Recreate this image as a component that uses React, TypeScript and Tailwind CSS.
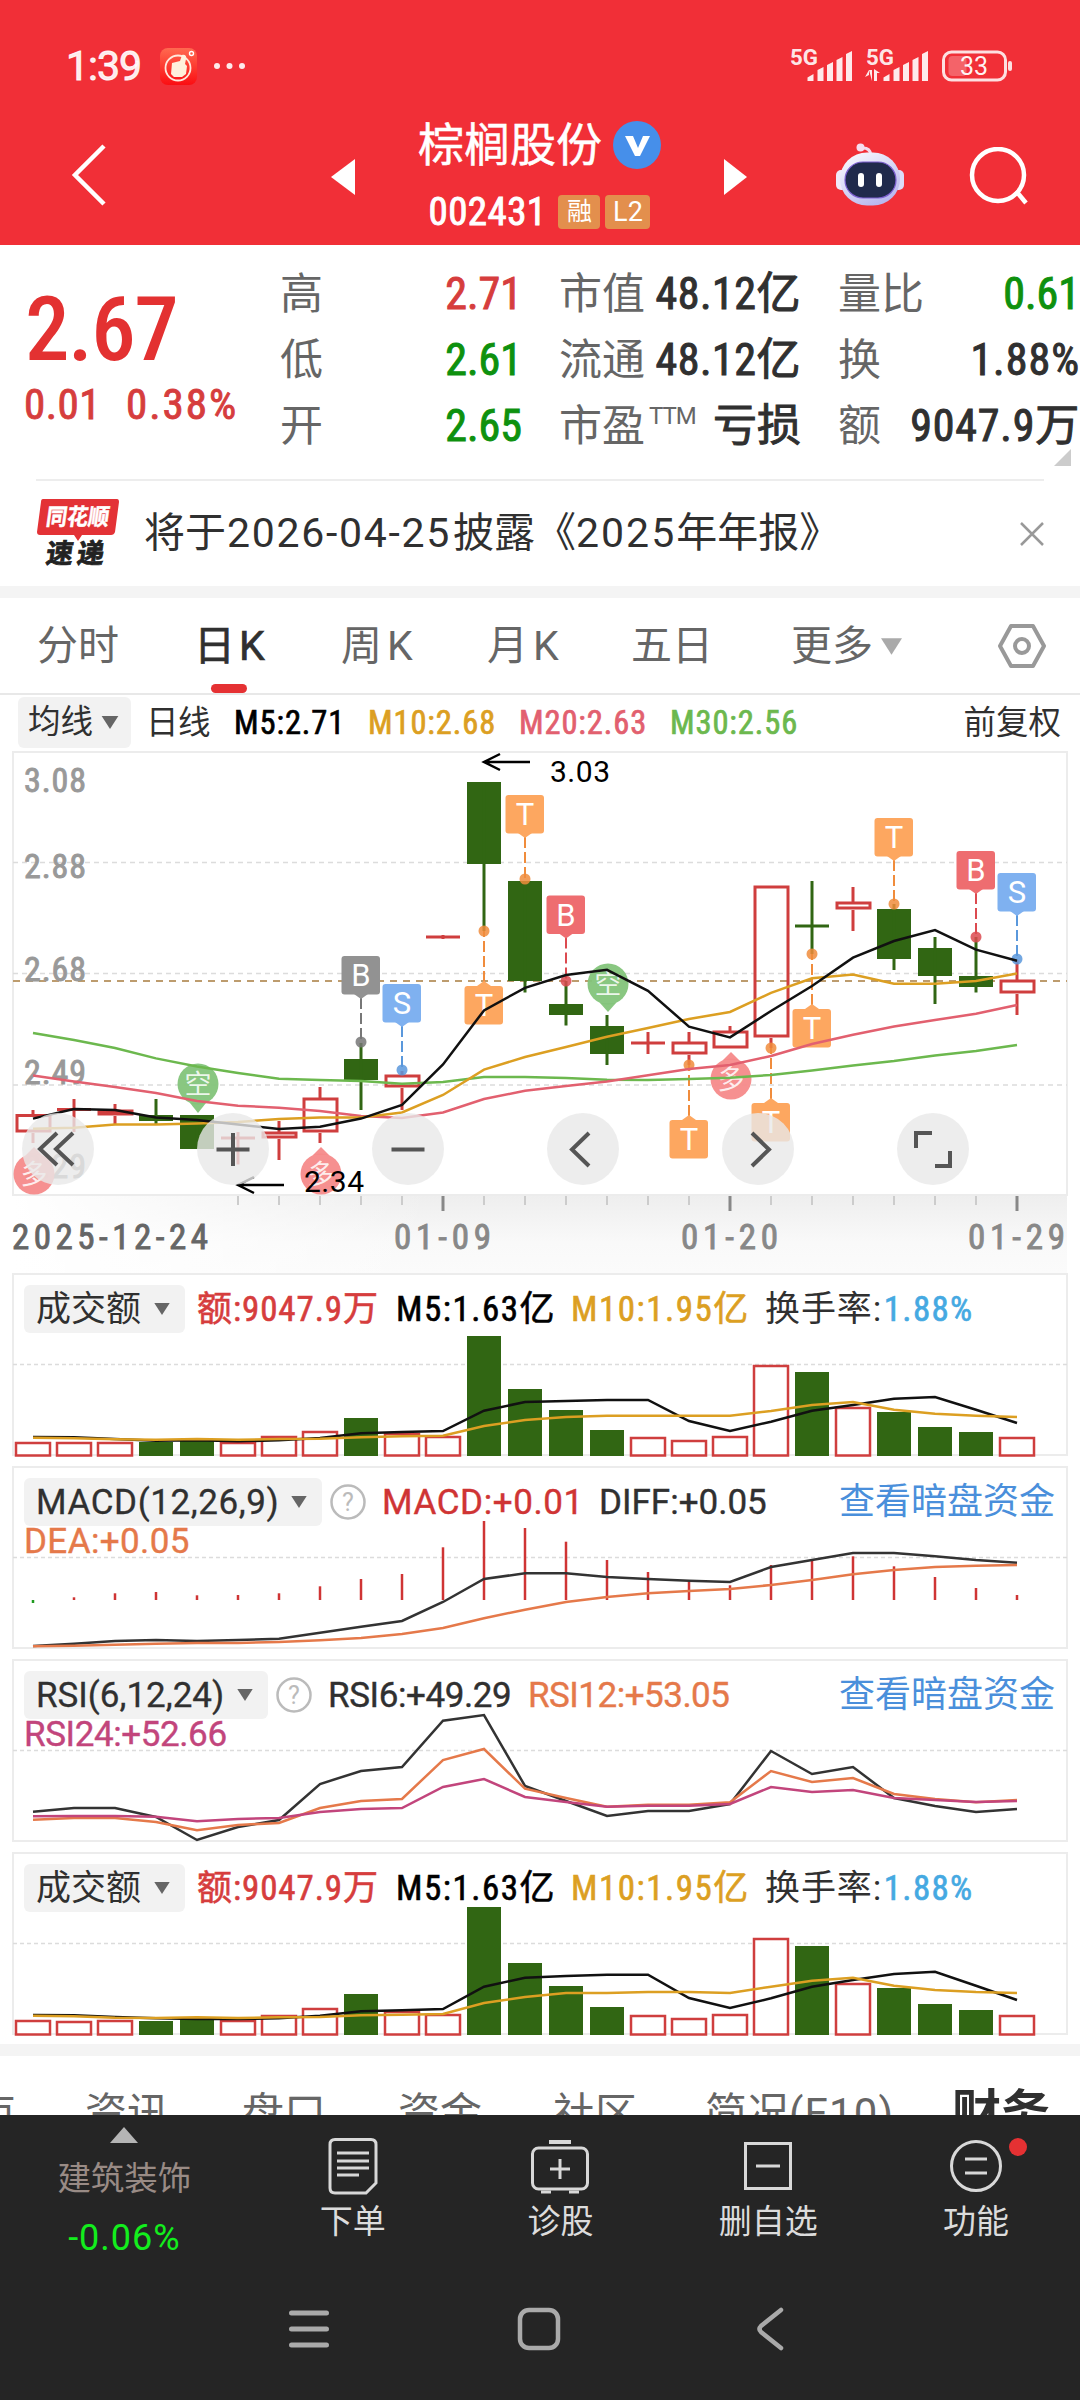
import type { ReactNode } from "react";

const GREEN = "#316613";
const RED = "#cf3e3e";

const colX = (i: number) => 33 + i * 41;

const toPoints = (ys: number[]) =>
  ys.map((y, i) => `${colX(i)},${y}`).join(" ");

type Candle = {
  top: number;
  bottom: number;
  high: number;
  low: number;
  up?: boolean;
};

const candles: Candle[] = [
  { top: 364.5, bottom: 383, high: 360, low: 393, up: true },
  { top: 359.5, bottom: 360.5, high: 349, low: 382, up: true },
  { top: 360, bottom: 366, high: 354, low: 375, up: true },
  { top: 365, bottom: 371, high: 349, low: 374 },
  { top: 365, bottom: 399, high: 365, low: 399 },
  { top: 388, bottom: 388, high: 382, low: 414.5, up: true },
  { top: 382, bottom: 389, high: 371, low: 410, up: true },
  { top: 348, bottom: 383, high: 337, low: 393, up: true },
  { top: 309, bottom: 330, high: 293, low: 360 },
  { top: 325, bottom: 338, high: 321, low: 360, up: true },
  { top: 187, bottom: 187, high: 185, low: 189, up: true },
  { top: 32, bottom: 114, high: 32, low: 181 },
  { top: 131, bottom: 231, high: 131, low: 242.5 },
  { top: 254, bottom: 265, high: 231, low: 275.5 },
  { top: 276, bottom: 304, high: 265, low: 315 },
  { top: 293, bottom: 293, high: 282, low: 304, up: true },
  { top: 292, bottom: 305, high: 282, low: 315, up: true },
  { top: 281, bottom: 299, high: 276, low: 298, up: true },
  { top: 136, bottom: 288, high: 136, low: 298, up: true },
  { top: 176, bottom: 176, high: 131, low: 204 },
  { top: 152, bottom: 160, high: 137, low: 181, up: true },
  { top: 159, bottom: 209, high: 154, low: 220 },
  { top: 198, bottom: 226, high: 187, low: 254 },
  { top: 226, bottom: 237, high: 187, low: 242.5 },
  { top: 230, bottom: 244, high: 210, low: 265, up: true },
];

const averages = [
  {
    color: "#6cb84e",
    ys: [283, 290, 298, 308.4, 316.5, 323, 328.7, 330, 331, 333.7, 332, 327, 327, 328, 329.7, 330, 329, 327.7, 325, 320.6, 315.5, 311, 305.4, 301, 295],
  },
  {
    color: "#e2606f",
    ys: [325.6, 331.4, 337, 343, 351, 355.7, 357.7, 361, 365.9, 368, 362.5, 349, 340.8, 336, 331.4, 325.3, 319, 315, 306, 294, 284.7, 276.6, 270, 263.8, 255],
  },
  {
    color: "#dc9f22",
    ys: [378.7, 377.7, 374.6, 374.6, 373.6, 372, 369, 367.6, 367.6, 362.5, 345, 319.6, 307, 297, 286.8, 278, 269, 262, 242.8, 228.3, 224.6, 233.7, 233.7, 231, 223.6],
  },
  {
    color: "#111111",
    ys: [368.6, 359, 360, 367.6, 370, 374.6, 379, 376.7, 368.6, 355, 314.5, 260.4, 237.8, 225, 219.8, 240.8, 276.6, 287.4, 261, 236, 207.7, 191, 180, 199.6, 210.7],
  },
];

const markers = [
  { i: 8, box: 206, dot: 292, label: "B", fill: "#929292", line: "#777777" },
  { i: 9, box: 234, dot: 320, label: "S", fill: "#7fb1f0", line: "#5a98dc" },
  { i: 11, box: 236, dot: 181, label: "T", fill: "#fda760", line: "#f08c3c" },
  { i: 12, box: 45, dot: 129, label: "T", fill: "#fda760", line: "#f08c3c" },
  { i: 13, box: 145.5, dot: 231, label: "B", fill: "#ee6d70", line: "#dc4a50" },
  { i: 16, box: 370, dot: 315, label: "T", fill: "#fda760", line: "#f08c3c" },
  { i: 18, box: 353, dot: 298, label: "T", fill: "#fda760", line: "#f08c3c" },
  { i: 19, box: 259, dot: 204, label: "T", fill: "#fda760", line: "#f08c3c" },
  { i: 21, box: 68, dot: 154, label: "T", fill: "#fda760", line: "#f08c3c" },
  { i: 23, box: 101, dot: 187, label: "B", fill: "#ee6d70", line: "#dc4a50" },
  { i: 24, box: 123, dot: 209, label: "S", fill: "#7fb1f0", line: "#5a98dc" },
];

const pins = [
  { i: 0, cy: 424, tip: 397, label: "多" },
  { i: 4, cy: 334, tip: 363, label: "空" },
  { i: 7, cy: 424, tip: 397, label: "多" },
  { i: 14, cy: 234, tip: 262, label: "空" },
  { i: 17, cy: 329, tip: 302, label: "多" },
];

const upBars = [0, 1, 2, 5, 6, 7, 9, 10, 15, 16, 17, 18, 20, 24];

const volumeA = {
  bars: [170, 170, 170, 169, 168, 170, 164, 159, 145, 161, 164, 63, 116, 137, 157, 165, 168, 164, 93, 99, 135, 139, 154, 159, 165],
  m5: [164, 164.3, 166, 167.7, 167.3, 168.3, 167.3, 165, 160.3, 159, 158, 137.7, 129, 128, 127, 127, 148, 158, 148.7, 137.7, 132, 125.7, 124, 136.7, 150],
  m10: [164.7, 165.3, 166.3, 166.7, 166, 166.7, 166, 165.7, 164.3, 163.3, 162.7, 153, 147, 144, 142.7, 142.7, 142.7, 142.7, 138, 132, 129, 136.7, 140.7, 142.7, 144],
};

const volumeB = {
  bars: [169, 170, 169, 169, 167, 169, 164, 157, 142, 160, 163, 55, 111, 134, 155, 164, 167, 163, 87, 94, 132, 136, 152, 158, 164],
  m5: [163, 163.3, 165, 166.3, 167, 167, 166.3, 163.7, 159.3, 158.3, 157, 134.7, 125.7, 124, 122.7, 122.7, 146, 156, 146.3, 134.7, 128, 122, 119.7, 133.7, 148],
  m10: [163.7, 164.3, 165.7, 166, 165.3, 166, 165.3, 165, 163.3, 162.7, 162, 151, 145, 141, 141, 140, 140, 141, 134.7, 128.7, 125.7, 133.7, 138, 140, 141],
};

const macd = {
  bars: [137, 131.3, 127.3, 126, 129.3, 129, 127.3, 120.3, 113, 108, 81.3, 55, 62, 75.7, 94, 106, 116, 119.3, 99, 95, 90.3, 100.3, 111, 122, 129],
  diff: [180, 177.7, 175, 174, 175, 174, 172.7, 166.7, 160.7, 155, 136, 113, 107.3, 107.3, 111, 113, 114.7, 116, 101, 94, 87, 87, 90.3, 94, 96.7],
  dea: [180.3, 179.7, 178.7, 177.7, 177, 177, 176, 174.3, 172, 168, 162, 152.3, 143.7, 136, 131, 127.3, 125, 123, 119, 114, 108.3, 104, 101, 99.7, 99],
};

const rsi = [
  {
    color: "#333333",
    ys: [152.7, 149, 149, 158, 181, 168, 161, 125, 112, 108, 61.7, 56, 127, 142, 157, 152, 152, 145, 92, 115, 108, 139, 147, 153, 150],
  },
  {
    color: "#e5794a",
    ys: [160.7, 159, 159, 163, 171.3, 166, 164, 149, 142, 140, 101, 90, 129.7, 139, 147.7, 145.7, 145.7, 143.3, 112, 123, 119, 135, 140, 143.3, 141],
  },
  {
    color: "#c2457c",
    ys: [157.3, 157, 157, 157.7, 162.3, 160, 159, 153, 150, 149, 128, 120, 138, 143, 147.7, 146.7, 146.7, 145, 128, 133, 131, 139, 141, 143, 142],
  },
];

function Caret({ className }: { className: string }) {
  return (
    <svg viewBox="0 0 18 14" className={className}>
      <path d="M0 0h18L9 14z" fill="currentColor" />
    </svg>
  );
}

function Signal({ data }: { data?: boolean }) {
  return (
    <svg width="66" height="40" viewBox="0 0 66 40" fill="#fff" fillOpacity="0.9" className="overflow-visible">
      <text x="0" y="19" fontSize="22" fontWeight="700" textLength="28" lengthAdjust="spacingAndGlyphs">
        5G
      </text>
      <path d="M17.500 35v-3.500l6-3.500v7z" />
      <path d="M27.500 35V24l6-3v14zM37 35V19l6-3v19zM46.500 35V14l6-3v24zM56 35V8l6-3v30z" />
      {data && <path d="M3 24h3v11zL-1 31l4-2zM8 35h3V27h3l-6-4z" />}
    </svg>
  );
}

function StatusBar() {
  return (
    <div className="flex h-[90px] items-center pt-[42px] pl-[66px]">
      <span className="w-[94px] text-[41px] leading-none tracking-[-1px] text-white/90 [-webkit-text-stroke:0.900px]">1:39</span>
      <svg width="37" height="37" viewBox="0 0 37 37">
        <defs>
          <linearGradient id="app" x1="0" y1="0" x2="0" y2="1">
            <stop offset="0" stopColor="#ff6a50" />
            <stop offset="1" stopColor="#fb0d12" />
          </linearGradient>
        </defs>
        <rect width="37" height="37" rx="8" fill="url(#app)" />
        <circle cx="18" cy="20" r="12.500" fill="none" stroke="#ffe9dc" strokeWidth="1.800" />
        <path d="M12 15l8-2 2-6c3-1 5 1 4 4l-1 5 2 2-1 8-4 3h-8l-3-3z" fill="#fff1dc" />
        <circle cx="31.500" cy="5.500" r="2" fill="none" stroke="#fff" strokeWidth="1.400" />
      </svg>
      <svg width="34" height="8" viewBox="0 0 34 8" className="ml-[16px]" fill="#fff" fillOpacity="0.9">
        <circle cx="4" cy="4" r="3" />
        <circle cx="16.500" cy="4" r="3" />
        <circle cx="29" cy="4" r="3" />
      </svg>
      <div className="ml-[543px] flex items-center gap-[10px]">
        <Signal />
        <Signal data />
        <svg width="72" height="34" viewBox="0 0 72 34">
          <rect x="1.500" y="3" width="62" height="28" rx="8" fill="none" stroke="#fff" strokeOpacity="0.85" strokeWidth="3" />
          <rect x="6.500" y="7" width="18" height="20" rx="4" fill="#fff" fillOpacity="0.25" />
          <rect x="66" y="12" width="4" height="10" rx="2" fill="#fff" fillOpacity="0.85" />
          <text x="18" y="26" fontSize="25" fill="#fff" fillOpacity="0.95" textLength="28">
            33
          </text>
        </svg>
      </div>
    </div>
  );
}

function Header() {
  return (
    <header className="h-[245px] bg-[#f12f37] text-white">
      <StatusBar />
      <div className="flex h-[155px] items-center pt-[19px]">
        <svg width="36" height="64" viewBox="0 0 36 64" className="-mt-[4px] ml-[71px]">
          <path d="M33 3L4 32l29 29" fill="none" stroke="#fff" strokeWidth="4.500" />
        </svg>
        <svg width="24" height="36" viewBox="0 0 24 36" className="ml-[224px]">
          <path d="M24 0v36L0 18z" fill="#fff" />
        </svg>
        <div className="-mt-[7px] flex w-[369px] flex-col items-center">
          <div className="flex h-[60px] items-center gap-[11px]">
            <h1 className="text-[46px] leading-none [-webkit-text-stroke:0.500px]">棕榈股份</h1>
            <svg width="48" height="48" viewBox="0 0 48 48">
              <circle cx="24" cy="24" r="24" fill="#468fea" />
              <path d="M12 15h8l5 12 5-12h7L27 35h-5z" fill="#fff" />
            </svg>
          </div>
          <div className="mt-[17px] flex h-[40px] items-center">
            <span className="mr-[12px] font-stretch-condensed text-[39px] leading-none tracking-[0.400px] [-webkit-text-stroke:0.900px]">
              002431
            </span>
            <span className="mr-[5px] flex h-[34px] w-[42px] items-center justify-center rounded-[4px] bg-[#e38f4d] text-[25px]">
              融
            </span>
            <span className="flex h-[34px] w-[45px] items-center justify-center rounded-[4px] bg-[#e38f4d] text-[27px]">
              L2
            </span>
          </div>
        </div>
        <svg width="23" height="36" viewBox="0 0 23 36">
          <path d="M0 0v36l23-18z" fill="#fff" />
        </svg>
        <svg width="68" height="64" viewBox="0 0 68 64" className="-mt-[4px] ml-[89px]">
          <defs>
            <linearGradient id="head" x1="0" y1="0" x2="0.600" y2="1">
              <stop offset="0" stopColor="#ffffff" />
              <stop offset="1" stopColor="#b9b8ee" />
            </linearGradient>
          </defs>
          <rect x="0" y="27" width="12" height="20" rx="5" fill="#f0e9f9" />
          <rect x="56" y="27" width="12" height="20" rx="5" fill="#dcdcf8" />
          <path d="M25 5q9-1 10 7" fill="none" stroke="#f3dbee" strokeWidth="3" />
          <circle cx="24.500" cy="4.500" r="4" fill="#f6def0" />
          <rect x="4" y="9.500" width="60" height="53" rx="27" fill="url(#head)" />
          <rect x="9" y="19" width="51" height="36" rx="18" fill="#202a4c" stroke="#7c5fd0" strokeWidth="1.200" />
          <rect x="22" y="30" width="6" height="14" rx="3" fill="#fff" />
          <rect x="40" y="30" width="6" height="14" rx="3" fill="#fff" />
        </svg>
        <svg width="60" height="60" viewBox="0 0 60 60" className="ml-[65px]" fill="none" stroke="#fff" strokeWidth="4.500">
          <circle cx="29" cy="28" r="26" />
          <path d="M47 44l10 12" />
        </svg>
      </div>
    </header>
  );
}

function Stat({ label, children, className }: { label: ReactNode; children: ReactNode; className: string }) {
  return (
    <div className="flex items-center justify-between whitespace-nowrap">
      <span className="text-[43px] text-[#666]">{label}</span>
      <span className={`font-stretch-condensed text-[44px] [-webkit-text-stroke:1px] ${className}`}>{children}</span>
    </div>
  );
}

function Quote() {
  return (
    <section className="relative flex h-[234px] leading-none">
      <div className="w-[280px] pt-[40px] font-stretch-condensed text-[#e33131]">
        <p className="pl-[25px] text-[89px] leading-[90px] font-medium tracking-[-1.500px]">2.67</p>
        <p className="mt-[4px] flex gap-[25px] pl-[24px] text-[43px] leading-[50px] text-[#d63d3d] [-webkit-text-stroke:0.900px]">
          <span className="tracking-[0.500px]">0.01</span>
          <span className="tracking-[2px]">0.38%</span>
        </p>
      </div>
      <div className="grid h-[216px] grid-cols-[242px_242px_242px] grid-rows-[66px_66px_66px] gap-x-[37px] pt-[16px] text-[#303030]">
        <Stat label="高" className="text-[#d63d3d]">2.71</Stat>
        <Stat label="市值" className="tracking-[0.5px]">48.12亿</Stat>
        <Stat label="量比" className="text-[#0e910e]">0.61</Stat>
        <Stat label="低" className="text-[#0e910e]">2.61</Stat>
        <Stat label="流通" className="tracking-[0.5px]">48.12亿</Stat>
        <Stat label="换" className="tracking-[1px]">1.88%</Stat>
        <Stat label="开" className="text-[#0e910e]">2.65</Stat>
        <Stat
          label={
            <span className="flex">
              市盈<span className="mt-[-1px] ml-[4px] text-[24px] tracking-[-1px]">TTM</span>
            </span>
          }
          className=""
        >
          亏损
        </Stat>
        <Stat label="额" className="tracking-[0.800px]">9047.9万</Stat>
      </div>
      <svg width="17" height="17" viewBox="0 0 17 17" className="absolute right-[9px] bottom-[13px]">
        <path d="M17 0v17H0z" fill="#ccc" />
      </svg>
    </section>
  );
}

function Notice() {
  return (
    <div className="px-[36px]">
      <div className="flex h-[107px] items-center border-t-2 border-[#ededed]">
        <svg width="86" height="70" viewBox="0 0 86 70" fontWeight="700" className="overflow-visible">
          <path d="M7 0h74q2 0 2 3l-4 30q-1 3-4 3H46l-4 6-4-6H4q-3 0-3-3L5 3q0-3 2-3z" fill="#e33236" />
          <g transform="skewX(-8)" stroke="#fff" strokeWidth="0.500">
            <text x="13" y="26" fontSize="23" fill="#fff" textLength="63" lengthAdjust="spacingAndGlyphs">
              同花顺
            </text>
          </g>
          <g transform="skewX(-8)" stroke="#222" strokeWidth="0.800">
            <text x="18" y="64" fontSize="27" fill="#222" textLength="58">
              速递
            </text>
          </g>
        </svg>
        <p className="ml-[22px] text-[41px] leading-none whitespace-nowrap text-[#303030]">
          将于<span className="mr-[2px] ml-[1px] tracking-[1.700px]">2026-04-25</span>披露《
          <span className="tracking-[2px]">2025</span>年年报》
        </p>
        <svg width="24" height="24" viewBox="0 0 24 24" className="ml-auto" stroke="#999" strokeWidth="2.500">
          <path d="M1 1l22 22M23 1L1 23" />
        </svg>
      </div>
    </div>
  );
}

function PeriodTabs() {
  return (
    <nav className="flex h-[97px] items-center border-b-2 border-[#e8e8e8] pt-px pl-[37px] text-[41px] leading-none whitespace-nowrap text-[#666]">
      <span className="w-[157px]">分时</span>
      <span className="relative flex h-full w-[147px] items-center text-[#303030] [-webkit-text-stroke:0.700px]">
        日<span className="ml-[4px]">K</span>
        <i className="absolute bottom-0 left-[17px] h-[9px] w-[36px] rounded-[5px] bg-[#e53133]" />
      </span>
      <span className="w-[146px]">周<span className="ml-[5px]">K</span></span>
      <span className="w-[144px]">月<span className="ml-[5px]">K</span></span>
      <span className="w-[160px]">五日</span>
      <span className="flex w-[207px] items-center">
        更多
        <Caret className="ml-[8px] h-[17px] w-[21px] text-[#aaa]" />
      </span>
      <svg width="48" height="46" viewBox="0 0 48 46" fill="none" stroke="#999" strokeWidth="4" strokeLinejoin="round">
        <path d="M13 3h22l11 20-11 20H13L2 23z" />
        <circle cx="24" cy="23" r="7" />
      </svg>
    </nav>
  );
}

function Averages() {
  return (
    <div className="flex h-[55px] items-start pt-[2px] pl-[18px] font-stretch-condensed text-[32.500px] leading-[53px] tracking-[0.900px] whitespace-nowrap [-webkit-text-stroke:0.700px]">
      <span className="flex h-[51px] w-[113px] items-center rounded-[6px] bg-[#f2f2f2] pl-[10px] tracking-normal text-[#303030] [-webkit-text-stroke:0px]">
        均线
        <Caret className="ml-[8px] h-[13px] w-[18px] text-[#666]" />
      </span>
      <span className="ml-[15px] w-[88px] tracking-[-0.500px] text-[#303030] [-webkit-text-stroke:0px]">日线</span>
      <span className="w-[134px] text-black">M5:2.71</span>
      <span className="w-[151px] text-[#dc9f22]">M10:2.68</span>
      <span className="w-[151px] text-[#e2606f]">M20:2.63</span>
      <span className="text-[#6cb84e]">M30:2.56</span>
      <span className="mr-[19px] ml-auto tracking-normal text-[#303030] [-webkit-text-stroke:0px]">前复权</span>
    </div>
  );
}

function CandleShape({ c, x }: { c: Candle; x: number }) {
  const color = c.up ? RED : GREEN;
  const h = c.bottom - c.top;
  return (
    <g>
      {h < 2 ? (
        <path d={`M${x - 17} ${c.top}h34`} stroke={color} strokeWidth="3" />
      ) : (
        <rect
          x={c.up ? x - 16 : x - 17}
          y={c.up ? c.top + 1 : c.top}
          width={c.up ? 33 : 34}
          height={c.up ? h - 3 : h}
          fill={c.up ? "none" : color}
          stroke={c.up ? color : "none"}
          strokeWidth="3"
        />
      )}
      <path
        d={h < 2 || !c.up ? `M${x} ${c.high}V${c.low}` : `M${x} ${c.high}V${c.top}M${x} ${c.bottom}V${Math.max(c.low, c.bottom)}`}
        stroke={color}
        strokeWidth="3"
      />
    </g>
  );
}

function Marker({ x, box, dot, label, fill, line }: { x: number; box: number; dot: number; label: string; fill: string; line: string }) {
  const below = box > dot;
  const edge = below ? box : box + 38;
  const dir = below ? -1 : 1;
  return (
    <g>
      <path d={`M${x} ${edge + dir * 4}V${dot}`} stroke={line} strokeWidth="2" strokeDasharray="11 4" />
      <circle cx={x} cy={dot} r="5.500" fill={line} fillOpacity="0.850" />
      <rect x={x - 19.5} y={box} width="38.500" height="38.500" rx="3" fill={fill} />
      <path d={`M${x - 7} ${edge}h14l-7 ${dir * 5}z`} fill={fill} />
      <text x={x} y={box + 30} fontSize="31" fill="#fff" textAnchor="middle">
        {label}
      </text>
    </g>
  );
}

function Pin({ x, cy, tip, label }: { x: number; cy: number; tip: number; label: string }) {
  const dir = tip > cy ? 1 : -1;
  return (
    <g>
      <g fill={label === "空" ? "#83c47a" : "#f58a8a"} fillOpacity="0.950">
        <path d={`M${x - 8} ${cy + dir * 19}h16L${x} ${tip}z`} />
        <circle cx={x} cy={cy} r="20.500" />
      </g>
      <text x={x} y={cy + 10} fontSize="27" fill="#fff" fillOpacity="0.850" textAnchor="middle">
        {label}
      </text>
    </g>
  );
}

const buttonIcons = [
  "M35 20L18 36l17 16M51 20L34 36l17 16",
  "M36 20v33M19.500 36.500h33",
  "M19.500 36.500h33",
  "M42 20L25 36.500 42 53",
  "M30 20l17 16.500L30 53",
  "M35 20H19v15M38 53h15V38",
];

function PriceChart() {
  return (
    <div className="relative h-[523px]">
      <svg width="1080" height="523" viewBox="0 0 1080 523" fill="none">
        <defs>
          <linearGradient id="axis" x1="0" y1="0" x2="0" y2="1">
            <stop offset="0" stopColor="#eeeeee" />
            <stop offset="0.600" stopColor="#f9f9f9" />
            <stop offset="1" stopColor="#fbfbfb" />
          </linearGradient>
          <linearGradient id="fade">
            <stop offset="0" stopColor="#fff" />
            <stop offset="1" stopColor="#fff" stopOpacity="0" />
          </linearGradient>
        </defs>
        <rect x="13" y="446" width="1054" height="77" fill="url(#axis)" />
        <rect x="13" y="446" width="420" height="77" fill="url(#fade)" />
        <rect x="13" y="2" width="1054" height="443" fill="#fff" stroke="#ececec" strokeWidth="2" />
        <path d="M13 112.500h1054M13 223.500h1054M13 335h1054" stroke="#dcdcdc" strokeWidth="1.500" strokeDasharray="5 4" />
        <path d="M13 231h1054" stroke="#bd9c6e" strokeWidth="2" strokeDasharray="7 6" />
        <g fontSize="34" fill="#999" stroke="#999" strokeWidth="0.900" className="font-stretch-condensed">
          <text x="24" y="42" textLength="62">3.08</text>
          <text x="24" y="128" textLength="62">2.88</text>
          <text x="24" y="231" textLength="62">2.68</text>
          <text x="24" y="334" textLength="62">2.49</text>
          <text x="24" y="428" textLength="62">2.29</text>
        </g>
        {candles.map((c, i) => (
          <CandleShape key={i} c={c} x={colX(i)} />
        ))}
        {pins.map(({ i, ...p }) => (
          <Pin key={i} x={colX(i) + 1} {...p} />
        ))}
        {markers.map(({ i, ...m }) => (
          <Marker key={i} x={colX(i)} {...m} />
        ))}
        {averages.map((a) => (
          <polyline key={a.color} points={toPoints(a.ys)} stroke={a.color} strokeWidth="2.500" />
        ))}
        <path d="M530 12h-45M500 4l-16 8 16 8M284 435h-45M254 427l-16 8 16 8" stroke="#000" strokeWidth="2.500" />
        <g fontSize="30" fill="#000">
          <text x="550" y="32" textLength="60">3.03</text>
          <text x="304" y="442" textLength="60">2.34</text>
        </g>
        {candles.map((_, i) =>
          i < 5 ? null : i % 7 === 3 ? (
            <path key={i} d={`M${colX(i)} 446v15`} stroke="#888" strokeWidth="3" />
          ) : (
            <path key={i} d={`M${colX(i)} 446v9`} stroke="#ccc" strokeWidth="2" />
          )
        )}
        <g fontSize="35" fill="#888" stroke="#888" strokeWidth="0.900" className="font-stretch-condensed">
          <text x="12" y="499" textLength="196" fill="#666" stroke="#666">2025-12-24</text>
          <text x="394" y="499" textLength="97">01-09</text>
          <text x="681" y="499" textLength="97">01-20</text>
          <text x="968" y="499" textLength="97">01-29</text>
        </g>
      </svg>
      <div className="absolute top-[363px] left-[22px] flex gap-[103px]">
        {buttonIcons.map((d) => (
          <button key={d} className="size-[72px] rounded-full bg-[#e8e8e8]/80">
            <svg width="72" height="72" viewBox="0 0 72 72" fill="none" stroke="#555" strokeWidth="4">
              <path d={d} />
            </svg>
          </button>
        ))}
      </div>
    </div>
  );
}

function Panel({ chart, children }: { chart: ReactNode; children: ReactNode }) {
  return (
    <section className="relative h-[183px] text-[35px] leading-none whitespace-nowrap">
      <svg width="1080" height="186" viewBox="0 0 1080 186" fill="none" className="absolute top-0 left-0">
        <rect x="13" y="1" width="1054" height="181" fill="#fff" stroke="#ececec" strokeWidth="2" />
        <path d="M13 91.500h1054" stroke="#dcdcdc" strokeWidth="1.500" strokeDasharray="4 3" />
        {chart}
      </svg>
      <div className="relative">{children}</div>
    </section>
  );
}

function Pill({ width, children }: { width: string; children: ReactNode }) {
  return (
    <span className={`ml-[24px] flex h-[48px] items-center justify-between rounded-[6px] bg-[#f2f2f2] pr-[14px] pl-[12px] text-[#303030] ${width}`}>
      {children}
      <Caret className="h-[12px] w-[18px] text-[#666]" />
    </span>
  );
}

function VolumePanel({ data }: { data: typeof volumeA }) {
  return (
    <Panel
      chart={
        <>
          {data.bars.map((y, i) =>
            upBars.includes(i) ? (
              <rect key={i} x={colX(i) - 17} y={y} width="34" height={182.5 - y} fill="#fff" stroke={RED} strokeWidth="2.500" />
            ) : (
              <rect key={i} x={colX(i) - 17} y={y} width="34" height={183 - y} fill={GREEN} />
            )
          )}
          <polyline points={toPoints(data.m5)} stroke="#111" strokeWidth="2.500" />
          <polyline points={toPoints(data.m10)} stroke="#dc9f22" strokeWidth="2.500" />
        </>
      }
    >
      <div className="flex items-center pt-[12px] font-stretch-condensed tracking-[0.900px] [-webkit-text-stroke:0.600px]">
        <Pill width="w-[161px]">
          <span className="tracking-normal [-webkit-text-stroke:0px]">成交额</span>
        </Pill>
        <span className="ml-[12px] w-[199px] text-[#d63d3d]">额:9047.9万</span>
        <span className="w-[175px] tracking-[1.500px] text-black">M5:1.63亿</span>
        <span className="w-[194px] tracking-[1.500px] text-[#dc9f22]">M10:1.95亿</span>
        <span className="text-[#303030] [-webkit-text-stroke:0px]">换手率:</span>
        <span className="ml-[2px] tracking-[1.300px] text-[#45a9e2]">1.88%</span>
      </div>
    </Panel>
  );
}

function Help() {
  return (
    <svg width="36" height="36" viewBox="0 0 36 36">
      <circle cx="18" cy="18" r="16.500" fill="none" stroke="#bbb" strokeWidth="2.500" />
      <text x="18" y="27" fontSize="25" fill="#bbb" textAnchor="middle">?</text>
    </svg>
  );
}

function MacdPanel() {
  return (
    <Panel
      chart={
        <>
          {macd.bars.map((y, i) => (
            <path key={i} d={`M${colX(i)} ${y}V134`} stroke={y > 134 ? "#1f9a1f" : "#cf3434"} strokeWidth="2.500" />
          ))}
          <polyline points={toPoints(macd.diff)} stroke="#333" strokeWidth="2.500" />
          <polyline points={toPoints(macd.dea)} stroke="#e5794a" strokeWidth="2.500" />
        </>
      }
    >
      <div className="flex items-center pt-[12px]">
        <Pill width="w-[298px]">
          <span className="tracking-[0.600px] [-webkit-text-stroke:0.300px]">MACD(12,26,9)</span>
        </Pill>
        <span className="ml-[8px] w-[52px]"><Help /></span>
        <span className="w-[217px] tracking-[0.600px] text-[#cf3434] [-webkit-text-stroke:0.400px]">MACD:+0.01</span>
        <span className="text-[#303030] [-webkit-text-stroke:0.400px]">DIFF:+0.05</span>
        <span className="mr-[25px] ml-auto text-[36px] text-[#4a8fdb]">查看暗盘资金</span>
      </div>
      <p className="ml-[24px] leading-[31px] tracking-[0.400px] text-[#e5794a] [-webkit-text-stroke:0.400px]">DEA:+0.05</p>
    </Panel>
  );
}

function RsiPanel() {
  return (
    <Panel chart={rsi.map((r) => <polyline key={r.color} points={toPoints(r.ys)} stroke={r.color} strokeWidth="2.500" />)}>
      <div className="flex items-center pt-[12px]">
        <Pill width="w-[244px]">
          <span className="[-webkit-text-stroke:0.300px]">RSI(6,12,24)</span>
        </Pill>
        <span className="ml-[8px] w-[52px]"><Help /></span>
        <span className="w-[200px] tracking-[-0.400px] text-[#303030] [-webkit-text-stroke:0.400px]">RSI6:+49.29</span>
        <span className="tracking-[-0.500px] text-[#e5794a] [-webkit-text-stroke:0.400px]">RSI12:+53.05</span>
        <span className="mr-[25px] ml-auto text-[36px] text-[#4a8fdb]">查看暗盘资金</span>
      </div>
      <p className="ml-[24px] leading-[31px] tracking-[-0.400px] text-[#c2457c] [-webkit-text-stroke:0.400px]">RSI24:+52.66</p>
    </Panel>
  );
}

function InfoTabs() {
  return (
    <div className="h-[59px] overflow-hidden">
      <div className="-ml-[67px] flex pt-[28px] text-[42px] leading-[60px] whitespace-nowrap text-[#666]">
        <span className="w-[152px] shrink-0">看点</span>
        <span className="w-[157px] shrink-0">资讯</span>
        <span className="w-[156px] shrink-0">盘口</span>
        <span className="w-[155px] shrink-0">资金</span>
        <span className="w-[152px] shrink-0">社区</span>
        <span className="w-[247px] shrink-0">简况<span className="tracking-[1.200px]">(F10)</span></span>
        <span className="shrink-0 text-[49px] font-bold text-[#303030]">财务</span>
      </div>
    </div>
  );
}

function ActionItem({ label, badge, children }: { label: string; badge?: boolean; children: ReactNode }) {
  return (
    <div className="relative flex w-[208px] flex-col items-center">
      <svg width="60" height="60" viewBox="0 0 60 60" fill="none" stroke="#d8d8d8" strokeWidth="3">
        {children}
      </svg>
      {badge && <i className="absolute top-[2px] right-[53px] size-[18px] rounded-full bg-[#e53133]" />}
      <span className="mt-[6px] text-[33px] leading-[40px] text-[#dcdcdc]">{label}</span>
    </div>
  );
}

function BottomBar() {
  return (
    <footer className="h-[285px] bg-[#252525]">
      <div className="flex pt-[21px]">
        <div className="-mt-[9px] flex w-[249px] flex-col items-center">
          <svg width="28" height="16" viewBox="0 0 28 16">
            <path d="M14 0l14 16H0z" fill="#b5b5b5" />
          </svg>
          <span className="mt-[16px] text-[33.500px] leading-[40px] text-[#998b85]">建筑装饰</span>
          <span className="mt-[19px] text-[36px] leading-[40px] tracking-[1px] text-[#13ee1d]">-0.06%</span>
        </div>
        <ActionItem label="下单">
          <path d="M12 3.500h36q5 0 5 5V47L43 57H12q-5 0-5-5V8.500q0-5 5-5z" />
          <path d="M14 17h32M14 25h32M14 32h32M14 39h22" />
        </ActionItem>
        <ActionItem label="诊股">
          <path d="M19 6h22" strokeWidth="4" />
          <rect x="2.500" y="12" width="55" height="41" rx="6" />
          <path d="M30 23v20M20 33h20M11 56h10M39 56h10" />
        </ActionItem>
        <ActionItem label="删自选">
          <rect x="7.500" y="7.500" width="45" height="45" />
          <path d="M18 30h24" />
        </ActionItem>
        <ActionItem label="功能" badge>
          <circle cx="30" cy="30" r="24.500" />
          <path d="M19 23h22M19 37h22" />
        </ActionItem>
      </div>
      <div className="mt-[49px] flex items-center pl-[288px]">
        <svg width="42" height="44" viewBox="0 0 42 44" stroke="#aaa" strokeWidth="5" strokeLinecap="round">
          <path d="M3.500 6h35M3.500 22h35M3.500 38h35" />
        </svg>
        <svg width="44" height="44" viewBox="0 0 44 44" fill="none" stroke="#aaa" strokeWidth="4.500" className="ml-[187px]">
          <rect x="3" y="3" width="38" height="38" rx="9" />
        </svg>
        <svg width="30" height="44" viewBox="0 0 30 44" fill="none" stroke="#aaa" strokeWidth="4.500" strokeLinecap="round" className="ml-[194px]">
          <path d="M26 3L6 19q-3 3 0 6l20 16" />
        </svg>
      </div>
    </footer>
  );
}

export default function App() {
  return (
    <main className="h-[2400px] w-[1080px] overflow-hidden bg-white font-['Roboto','Noto_Sans_CJK_SC',sans-serif]">
      <Header />
      <Quote />
      <Notice />
      <div className="h-[12px] bg-[#f4f4f4]" />
      <PeriodTabs />
      <Averages />
      <PriceChart />
      <div className="flex flex-col gap-[10px]">
        <VolumePanel data={volumeA} />
        <MacdPanel />
        <RsiPanel />
        <VolumePanel data={volumeB} />
      </div>
      <div className="mt-[9px] h-[12px] bg-[#f4f4f4]" />
      <InfoTabs />
      <BottomBar />
    </main>
  );
}
